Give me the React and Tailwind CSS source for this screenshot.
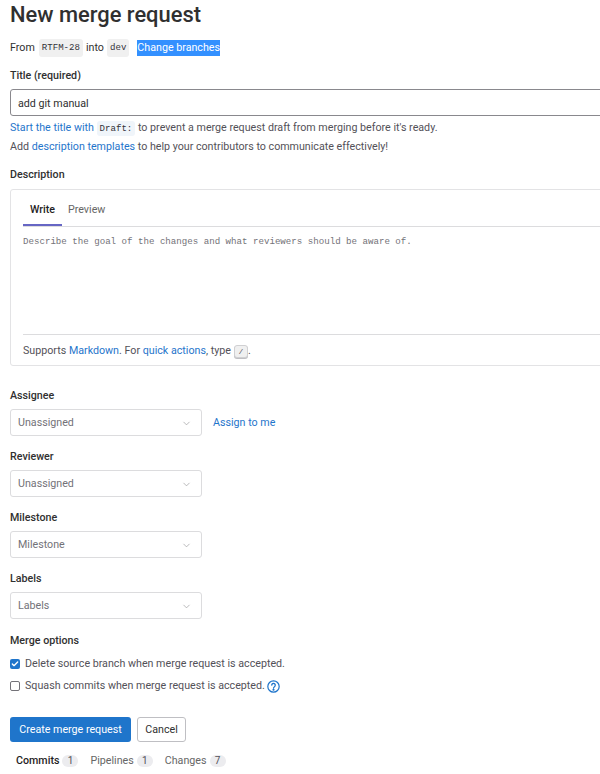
import React from "react";
import { ChevronDown, Check } from "lucide-react";

function Code({ children, className = "" }) {
  return (
    <code className={`rounded-[3px] bg-[#f0f0f0] px-[3px] py-[2px] font-['Liberation_Mono',monospace] text-[9.1px] text-[#333238] ${className}`}>
      {children}
    </code>
  );
}

function Field({ label, value, children }) {
  return (
    <div className="flex flex-col">
      <label className="h-[20px] font-medium leading-[22px] text-[#303030]">{label}</label>
      <div className="mt-[4px] flex items-center">
        <div className="flex h-[27px] w-[192px] items-center justify-between rounded-[3px] border border-[#dcdcde] pl-[7px] pr-[9px] pt-[1px] text-[#737278]">
          <span>{value}</span>
          <ChevronDown className="h-[11px] w-[11px] text-[#9a9a9e]" strokeWidth={1.5} />
        </div>
        {children}
      </div>
    </div>
  );
}

function Tab({ label, count, active }) {
  return (
    <div className="flex items-center gap-[3px]">
      <span className={active ? "font-medium text-[#1f1e24]" : "text-[#666666]"}>{label}</span>
      <span className="flex h-[12px] w-[16px] items-center justify-center rounded-full bg-[#ececef] text-[10px] text-[#535158]">{count}</span>
    </div>
  );
}

export default function App() {
  return (
    <div className="h-[774px] w-[600px] overflow-hidden bg-white px-[10px] font-['Roboto',sans-serif] text-[10.7px] text-[#303030]">
      <h1 className="h-[30px] text-[21.9px] font-medium leading-[30px] text-[#303030]">New merge request</h1>

      <div className="mt-[8px] flex h-[20px] items-center">
        <span>From</span>
        <Code className="ml-[4px]">RTFM-28</Code>
        <span className="ml-[3px]">into</span>
        <Code className="ml-[3px]">dev</Code>
        <span className="ml-[8px] bg-[#3390ff] leading-[16px] text-white">Change branches</span>
      </div>

      <label className="mt-[7px] block h-[20px] font-medium leading-[22px]">Title (required)</label>
      <input
        readOnly
        value="add git manual"
        className="mt-[4px] block h-[27px] w-[640px] rounded-[3px] border border-[#89888d] pl-[7px] pt-[1px] text-[#303030] outline-none"
      />
      <p className="mt-[2px] h-[19px] whitespace-nowrap leading-[19px] text-[#535158]">
        <span className="text-[#1f75cb]">Start the title with</span>{" "}
        <Code className="bg-[#f0f5fa] text-[#1f75cb]">Draft:</Code> to prevent a merge request draft from merging before it's ready.
      </p>
      <p className="h-[19px] whitespace-nowrap leading-[19px] text-[#535158]">
        Add <span className="text-[#1f75cb]">description templates</span> to help your contributors to communicate effectively!
      </p>

      <label className="mt-[8px] block h-[20px] font-medium leading-[22px]">Description</label>

      <div className="mt-[5px] h-[177px] w-[640px] rounded-[3px] border border-[#e3e3e5] pl-[12px]">
        <div className="flex h-[37px] border-b border-[#dcdcde]">
          <div className="flex w-[39px] items-center justify-center border-b-2 border-[#6666c4] pt-[6px] font-medium text-[#1f1e24]">Write</div>
          <div className="ml-[6px] flex items-center pt-[5px] text-[#666666]">Preview</div>
        </div>
        <div className="h-[108px] border-b border-[#dcdcde] pt-[8px] font-['Liberation_Mono',monospace] text-[9.13px] leading-[14px] text-[#737278]">
          Describe the goal of the changes and what reviewers should be aware of.
        </div>
        <div className="flex h-[30px] items-center pt-[3px] text-[#535158]">
          <span>
            Supports <span className="text-[#1f75cb]">Markdown</span>. For <span className="text-[#1f75cb]">quick actions</span>, type
          </span>
          <kbd className="ml-[3px] flex h-[13px] w-[14px] items-center justify-center rounded-[3px] border border-[#d0d0d2] bg-[#f0f0f0] font-['Liberation_Mono',monospace] text-[8px] text-[#535158] shadow-[0_1px_0_#bfbfc3]">/</kbd>
          <span>.</span>
        </div>
      </div>

      <div className="mt-[19px] flex flex-col gap-[10px]">
        <Field label="Assignee" value="Unassigned">
          <span className="ml-[11px] pt-[1px] text-[#1f75cb]">Assign to me</span>
        </Field>
        <Field label="Reviewer" value="Unassigned" />
        <Field label="Milestone" value="Milestone" />
        <Field label="Labels" value="Labels" />
      </div>

      <div className="mt-[11px] h-[20px] font-medium leading-[22px]">Merge options</div>

      <div className="mt-[4px] flex h-[20px] items-center gap-[5px] text-[#535158]">
        <span className="flex h-[10px] w-[10px] items-center justify-center rounded-[2px] bg-[#1f75cb]">
          <Check className="h-[8px] w-[8px] text-white" strokeWidth={4} />
        </span>
        <span>Delete source branch when merge request is accepted.</span>
      </div>
      <div className="mt-[2px] flex h-[20px] items-center gap-[5px] text-[#535158]">
        <span className="h-[10px] w-[10px] rounded-[2px] border border-[#737278]" />
        <span>Squash commits when merge request is accepted.</span>
        <svg viewBox="0 0 16 16" className="-ml-[3px] h-[13px] w-[13px] text-[#1f75cb]" fill="none" stroke="currentColor" strokeWidth="1.5">
          <circle cx="8" cy="8" r="7" />
          <path d="M5.8 6.3a2.2 2.2 0 1 1 3.4 1.9c-.8.5-1.2.9-1.2 1.8" strokeLinecap="round" />
          <circle cx="8" cy="12" r=".6" fill="currentColor" />
        </svg>
      </div>

      <div className="mt-[21px] flex items-center gap-[6px]">
        <button className="h-[25px] w-[121px] rounded-[3px] bg-[#1f75cb] pt-[1px] text-white">Create merge request</button>
        <button className="h-[25px] w-[49px] rounded-[3px] border border-[#bfbfc3] pt-[1px] text-[#303030]">Cancel</button>
      </div>

      <div className="mt-[9px] flex h-[20px] items-center gap-[12px] pl-[6px]">
        <Tab label="Commits" count="1" active />
        <Tab label="Pipelines" count="1" />
        <Tab label="Changes" count="7" />
      </div>
    </div>
  );
}
